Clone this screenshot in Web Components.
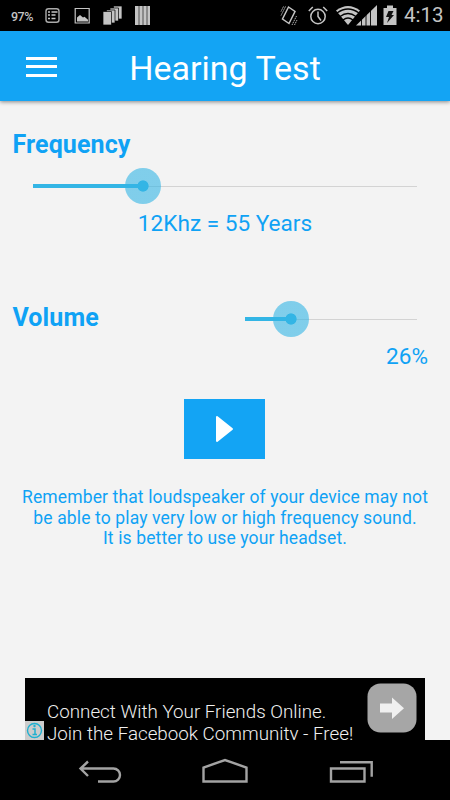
<!DOCTYPE html>
<html lang="en">
<head>
  <meta charset="UTF-8">
  <title>Hearing Test</title>
  <style>
    body {
      margin: 0;
      font-family: Roboto, "Noto Sans", sans-serif;
      background: #f3f3f3;
    }
  </style>
</head>
<body>
  <hearing-app></hearing-app>

  <script>
    class StatusBar extends HTMLElement {
      constructor() {
        super();
        this.shadowDOM = this.attachShadow({ mode: 'open' });
      }

      connectedCallback() {
        this.render();
      }

      render() {
        this.shadowDOM.innerHTML = `
          <style>
            :host {
              display: flex;
              align-items: center;
              height: 31px;
              box-sizing: border-box;
              padding: 0 7px 0 11px;
              background: #000;
              color: #c4c4c4;
            }
            svg { display: block; flex: none; }
            .battery { width: 34px; font-size: 12.5px; line-height: 31px; font-weight: 500; letter-spacing: -0.5px; padding-top: 1px; }
            .right { margin-left: auto; }
            .clock { width: 39px; margin-left: 5px; font-size: 20.5px; line-height: 31px; white-space: nowrap; }
          </style>
          <span class="battery">97%</span>
          <svg width="106" height="31" viewBox="45 0 106 31">
            <rect x="46" y="8.8" width="13" height="13.4" rx="2.5" fill="none" stroke="#aaa" stroke-width="1.4"/>
            <path d="M48 12h2M51.500 12h6M48 15h2M51.500 15h4M48 18.500h2M51.500 18.500h4" stroke="#c4c4c4" stroke-width="1.6"/>
            <path d="M75.200 8.500h14v14.500h-14z" fill="none" stroke="#c4c4c4" stroke-width="1.200"/>
            <path d="M77 21.500v-4l3-2.500 3 2.500 1.500-.8 3.500 3v1.800z" fill="#c4c4c4"/>
            <g fill="#c4c4c4" stroke="#000" stroke-width=".7">
              <path d="M113.500 6h8.500v13h-8.500z"/>
              <path d="M110 8h8.500v13h-8.500z"/>
              <path d="M106.500 10h8.500v13h-8.500z"/>
              <path d="M103 11.500h8.500v13.500h-8.500z"/>
            </g>
            <path d="M135 6h15v19h-15z" fill="#c4c4c4"/>
            <path d="M139 6v19M143 6v19M147 6v19" stroke="#444" stroke-width=".9"/>
          </svg>
          <svg class="right" width="121" height="31" viewBox="278 0 121 31">
            <g fill="none" stroke="#c4c4c4">
              <path d="M288.500 7l6.500 4.500-6 12-6.500-4.500z" stroke-width="1.500"/>
              <path d="M285.500 6.500l-4.500 9M283.500 6.500l-2.500 5M292 25l4.500-9M294.500 25l2.500-5" stroke-width=".9" stroke-dasharray="1.500 .7"/>
              <circle cx="318" cy="16.500" r="7.200" stroke-width="1.500"/>
              <path d="M318 11.500v5l3 4M308.800 11l4-4M327.200 11l-4-4" stroke-width="1.500"/>
            </g>
            <path d="M348 25l-12-14.500q12-9 24 0z" fill="#c4c4c4"/>
            <path d="M337 13q11-8 22 0M340 16.500q8-6 16 0M343 20q5-4 10 0" fill="none" stroke="#000" stroke-width="1.300"/>
            <path d="M356 25.500l21-20.500v20.500z" fill="#c4c4c4"/>
            <path d="M361.500 17v9M366 13v13M370.500 9v17" stroke="#000" stroke-width=".9"/>
            <path d="M387 5.500h6v2.500h3.500v17h-13v-17h3.500z" fill="#c4c4c4"/>
            <path d="M388.500 11h5l-2 4h2.500l-7 8 2-6h-3z" fill="#111"/>
          </svg>
          <span class="clock">4:13</span>
        `;
      }
    }

    class AppBar extends HTMLElement {
      constructor() {
        super();
        this.shadowDOM = this.attachShadow({ mode: 'open' });
      }

      connectedCallback() {
        this.render();
      }

      render() {
        this.shadowDOM.innerHTML = `
          <style>
            :host {
              display: grid;
              grid-template-columns: 104px 1fr 104px;
              align-items: center;
              height: 70px;
              background: #13a4f4;
              color: #fff;
              box-shadow: 0 1px 4px rgba(0, 0, 0, 0.45);
            }
            .menu { display: grid; gap: 5.5px; width: 31px; margin: 1px 0 0 26px; }
            .menu i { height: 3px; background: #fff; }
            h1 {
              margin: 4px 0 0;
              font-size: 34px;
              font-weight: 400;
              line-height: 42px;
              text-align: center;
              white-space: nowrap;
            }
          </style>
          <div class="menu"><i></i><i></i><i></i></div>
          <h1><slot></slot></h1>
        `;
      }
    }

    class SeekBar extends HTMLElement {
      constructor() {
        super();
        this.shadowDOM = this.attachShadow({ mode: 'open' });
      }

      connectedCallback() {
        this.render();
      }

      render() {
        this.shadowDOM.innerHTML = `
          <style>
            :host { display: flex; align-items: center; height: 36px; }
            .done { width: ${this.getAttribute('value')}; height: 4px; background: #33b5e5; }
            .rest { flex: 1; height: 1px; background: #d3d3d3; }
            .thumb {
              flex: none;
              width: 36px;
              height: 36px;
              margin: 0 -18px;
              border-radius: 50%;
              background: radial-gradient(circle, #33b5e5 5.2px, rgba(51, 181, 229, 0.6) 6px);
              z-index: 1;
            }
          </style>
          <div class="done"></div>
          <div class="thumb"></div>
          <div class="rest"></div>
        `;
      }
    }

    class PlayButton extends HTMLElement {
      constructor() {
        super();
        this.shadowDOM = this.attachShadow({ mode: 'open' });
      }

      connectedCallback() {
        this.render();
      }

      render() {
        this.shadowDOM.innerHTML = `
          <style>
            :host { display: block; width: 81px; height: 60px; background: #13a4f4; }
            svg { display: block; }
          </style>
          <svg width="81" height="60" viewBox="0 0 81 60">
            <path d="M33 18l15 12-15 12z" fill="#fff" stroke="#fff" stroke-width="2" stroke-linejoin="round"/>
          </svg>
        `;
      }
    }

    class AdBanner extends HTMLElement {
      constructor() {
        super();
        this.shadowDOM = this.attachShadow({ mode: 'open' });
      }

      connectedCallback() {
        this.render();
      }

      render() {
        this.shadowDOM.innerHTML = `
          <style>
            :host {
              display: flex;
              width: 400px;
              height: 62px;
              background: #000;
              color: #f0f0f0;
              overflow: hidden;
            }
            svg { display: block; flex: none; }
            .info { align-self: flex-end; }
            p {
              flex: 1;
              margin: 23px 0 0 3px;
              font-size: 18.8px;
              font-weight: 300;
              line-height: 22px;
              white-space: nowrap;
            }
            .go { margin: 5px 8px 0 0; }
          </style>
          <svg class="info" width="19" height="19" viewBox="0 0 19 19">
            <path d="M0 0h19v19h-19z" fill="#ccc"/>
            <circle cx="9.500" cy="9.500" r="7" fill="none" stroke="#1fb0d0" stroke-width="1.400"/>
            <path d="M7.500 8h2.500v5.500M7.500 13.500h4.500" fill="none" stroke="#1fb0d0" stroke-width="1.500"/>
            <circle cx="9.500" cy="5" r="1.200" fill="#1fb0d0"/>
          </svg>
          <p><slot></slot></p>
          <svg class="go" width="50" height="50" viewBox="0 0 50 50">
            <rect x=".5" y=".5" width="49" height="49" rx="13" fill="#a6a6a6"/>
            <path d="M13 20.500h12v-6l12 10.700-12 10.800v-6.500h-12z" fill="#f0f0f0"/>
          </svg>
        `;
      }
    }

    class NavBar extends HTMLElement {
      constructor() {
        super();
        this.shadowDOM = this.attachShadow({ mode: 'open' });
      }

      connectedCallback() {
        this.render();
      }

      render() {
        this.shadowDOM.innerHTML = `
          <style>
            :host {
              display: flex;
              justify-content: space-between;
              height: 60px;
              box-sizing: border-box;
              padding: 18px 76px 0 78px;
              background: #000;
            }
            svg { display: block; fill: none; stroke: #a3a3a3; stroke-width: 2.4; }
          </style>
          <svg width="44" height="30" viewBox="78 758 44 30">
            <path d="M98 781.500h15.500a6 6 0 0 0 0-13h-33M88 761.500l-7.500 7 7.500 7.500"/>
          </svg>
          <svg width="48" height="30" viewBox="201 758 48 30">
            <path d="M203.500 781.500v-14l21.500-7.500 21.500 7.500v14z"/>
          </svg>
          <svg width="46" height="30" viewBox="328 758 46 30">
            <path d="M331 768.500h33.500v13h-33.500zM340 762.300h31.700v14.500"/>
          </svg>
        `;
      }
    }

    class HearingApp extends HTMLElement {
      constructor() {
        super();
        this.shadowDOM = this.attachShadow({ mode: 'open' });
      }

      connectedCallback() {
        this.render();
      }

      render() {
        this.shadowDOM.innerHTML = `
          <style>
            :host {
              display: flex;
              flex-direction: column;
              height: 800px;
              overflow: hidden;
              color: #0fa2f5;
            }
            main { flex: 1; display: flex; flex-direction: column; }
            h2 { margin: 0; font-size: 25px; line-height: 30px; font-weight: 700; letter-spacing: 0.1px; }
            .frequency { padding: 29px 33px 0 12.5px; }
            .frequency seek-bar { margin: 8px 0 0 20.5px; }
            .value { font-size: 22.600px; line-height: 28px; white-space: nowrap; }
            .years { margin-top: 6px; text-align: center; }
            .volume {
              display: grid;
              grid-template-columns: 232.500px 172px;
              align-items: center;
              margin: 63px 0 0 12.500px;
            }
            .volume h2 { margin-bottom: 2px; }
            .percent { margin: 6px 22px 0 0; text-align: right; }
            play-button { margin: 28px 0 0 184px; }
            .hint {
              margin: 28px 0 0;
              font-size: 17.500px;
              line-height: 20.700px;
              letter-spacing: 0.13px;
              text-align: center;
              white-space: nowrap;
            }
            ad-banner { margin: auto auto 0 25px; }
          </style>
          <status-bar></status-bar>
          <app-bar>Hearing Test</app-bar>
          <main>
            <section class="frequency">
              <h2>Frequency</h2>
              <seek-bar value="110px"></seek-bar>
            </section>
            <div class="value years">12Khz = 55 Years</div>
            <section class="volume">
              <h2>Volume</h2>
              <seek-bar value="46px"></seek-bar>
            </section>
            <div class="value percent">26%</div>
            <play-button></play-button>
            <p class="hint">Remember that loudspeaker of your device may not<br>be able to play very low or high frequency sound.<br>It is better to use your headset.</p>
            <ad-banner>Connect With Your Friends Online.<br>Join the Facebook Community - Free!</ad-banner>
          </main>
          <nav-bar></nav-bar>
        `;
      }
    }

    customElements.define('status-bar', StatusBar);
    customElements.define('app-bar', AppBar);
    customElements.define('seek-bar', SeekBar);
    customElements.define('play-button', PlayButton);
    customElements.define('ad-banner', AdBanner);
    customElements.define('nav-bar', NavBar);
    customElements.define('hearing-app', HearingApp);
  </script>
</body>
</html>
